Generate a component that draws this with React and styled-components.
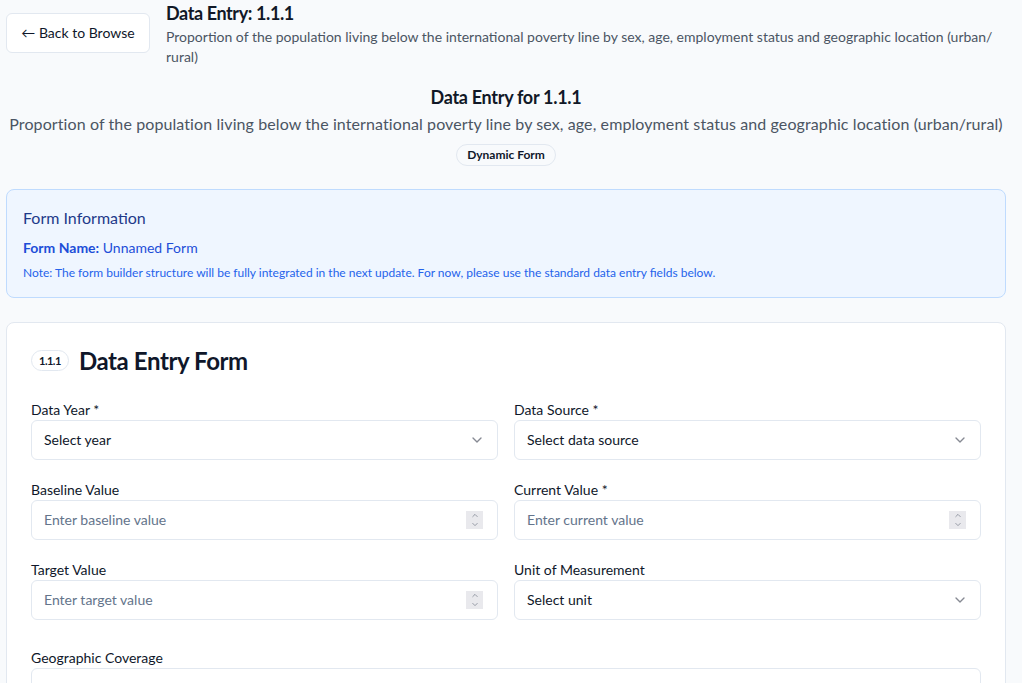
import React from 'react';
import styled, { createGlobalStyle } from 'styled-components';
import { ChevronDown, ChevronUp } from 'lucide-react';

const GlobalStyle = createGlobalStyle`
  html, body {
    margin: 0;
    padding: 0;
    background: #f8fafc;
    font-family: Lato, "Liberation Sans", sans-serif;
    color: #0f172a;
  }
  * { box-sizing: border-box; }
`;

const Page = styled.div`
  padding: 0 16px 0 6px;
`;

const TopBar = styled.div`
  display: flex;
  align-items: center;
  gap: 16px;
`;

const BackButton = styled.button`
  flex: none;
  width: 144px;
  height: 40px;
  padding: 0;
  background: #fff;
  border: 1px solid #e2e8f0;
  border-radius: 6px;
  font: inherit;
  font-size: 14px;
  color: #0f172a;
  margin-top: -2px;
`;

const TitleBlock = styled.div`
  min-width: 0;
`;

const PageTitle = styled.h1`
  margin: 0;
  font-size: 18px;
  line-height: 26px;
  font-weight: 700;
  letter-spacing: -0.4px;
  color: #111827;
`;

const PageSub = styled.p`
  margin: 1px 0 0;
  font-size: 14px;
  line-height: 20px;
  color: #4b5563;
`;

const Intro = styled.div`
  margin-top: 16px;
  text-align: center;
`;

const IntroTitle = styled.h2`
  margin: 0;
  font-size: 18px;
  line-height: 28px;
  font-weight: 700;
  letter-spacing: -0.3px;
  color: #111827;
`;

const IntroSub = styled.p`
  margin: 1px 0 0;
  font-size: 16px;
  line-height: 24px;
  letter-spacing: 0.1px;
  color: #4b5563;
`;

const Pill = styled.span`
  display: inline-flex;
  align-items: center;
  height: ${p => (p.$small ? '21px' : '22px')};
  padding: 0 ${p => (p.$small ? '7px' : '10px')};
  border: 1px solid #e2e8f0;
  border-radius: 999px;
  background: ${p => (p.$small ? '#fff' : 'transparent')};
  font-size: ${p => (p.$small ? '11px' : '12px')};
  font-weight: 700;
  color: #0f172a;
  letter-spacing: ${p => (p.$small ? '-0.5px' : '0')};
`;

const PillRow = styled.div`
  margin-top: 7px;
`;

const InfoBox = styled.section`
  margin-top: 23px;
  padding: 16px;
  background: #eff6ff;
  border: 1px solid #bfdbfe;
  border-radius: 8px;
`;

const InfoTitle = styled.h3`
  margin: 0;
  font-size: 16px;
  line-height: 24px;
  font-weight: 400;
  color: #1e3a8a;
`;

const InfoLine = styled.p`
  margin: 8px 0 0;
  font-size: 14px;
  line-height: 20px;
  color: #1d4ed8;

  strong { font-weight: 700; }
`;

const InfoNote = styled.p`
  margin: 7px 0 0;
  font-size: 12px;
  line-height: 16px;
  color: #2563eb;
`;

const Card = styled.section`
  margin-top: 24px;
  padding: 24px;
  background: #fff;
  border: 1px solid #e2e8f0;
  border-radius: 8px;
  min-height: 400px;
`;

const CardHead = styled.div`
  display: flex;
  align-items: center;
  gap: 10px;
  height: 28px;
`;

const CardTitle = styled.h2`
  margin: 0;
  font-size: 24px;
  line-height: 28px;
  font-weight: 700;
  letter-spacing: -0.4px;
  color: #0f172a;
`;

const Grid = styled.div`
  margin-top: 25px;
  display: grid;
  grid-template-columns: 1fr 1fr;
  column-gap: 16px;
  row-gap: 20px;
`;

const Field = styled.div`
  display: flex;
  flex-direction: column;
  margin-top: ${p => (p.$spaced ? '28px' : '0')};
`;

const Label = styled.label`
  font-size: 14px;
  line-height: 20px;
  color: #0f172a;
`;

const Control = styled.div`
  display: flex;
  align-items: center;
  justify-content: space-between;
  height: 40px;
  padding: 0 12px;
  background: #fff;
  border: 1px solid #e2e8f0;
  border-radius: 6px;
  font-size: 14px;
  color: #0f172a;

  svg.chev {
    color: #0f172a;
    opacity: 0.5;
  }
`;

const Input = styled.input`
  flex: 1;
  min-width: 0;
  border: 0;
  outline: none;
  padding: 0;
  background: transparent;
  font: inherit;
  color: #0f172a;

  &::placeholder { color: #64748b; }
`;

const Spinner = styled.span`
  display: flex;
  flex-direction: column;
  align-items: center;
  justify-content: center;
  width: 17px;
  height: 18px;
  margin-right: 2px;
  background: #e9e9ed;
  color: #6b7280;
  line-height: 0;
`;

function SelectField({ label, value }) {
  return (
    <Field>
      <Label>{label}</Label>
      <Control>
        <span>{value}</span>
        <ChevronDown className="chev" size={16} strokeWidth={2} />
      </Control>
    </Field>
  );
}

function NumberField({ label, placeholder }) {
  return (
    <Field>
      <Label>{label}</Label>
      <Control>
        <Input placeholder={placeholder} />
        <Spinner>
          <ChevronUp size={10} strokeWidth={1.75} />
          <ChevronDown size={10} strokeWidth={1.75} />
        </Spinner>
      </Control>
    </Field>
  );
}

const subtitle =
  'Proportion of the population living below the international poverty line by sex, age, employment status and geographic location (urban/rural)';

export default function App() {
  return (
    <>
      <GlobalStyle />
      <Page>
        <TopBar>
          <BackButton>← Back to Browse</BackButton>
          <TitleBlock>
            <PageTitle>Data Entry: 1.1.1</PageTitle>
            <PageSub>
              Proportion of the population living below the international poverty line by sex, age, employment status
              and geographic location (urban/<wbr />rural)
            </PageSub>
          </TitleBlock>
        </TopBar>

        <Intro>
          <IntroTitle>Data Entry for 1.1.1</IntroTitle>
          <IntroSub>{subtitle}</IntroSub>
          <PillRow>
            <Pill>Dynamic Form</Pill>
          </PillRow>
        </Intro>

        <InfoBox>
          <InfoTitle>Form Information</InfoTitle>
          <InfoLine>
            <strong>Form Name:</strong> Unnamed Form
          </InfoLine>
          <InfoNote>
            Note: The form builder structure will be fully integrated in the next update. For now, please use the
            standard data entry fields below.
          </InfoNote>
        </InfoBox>

        <Card>
          <CardHead>
            <Pill $small>1.1.1</Pill>
            <CardTitle>Data Entry Form</CardTitle>
          </CardHead>
          <Grid>
            <SelectField label="Data Year *" value="Select year" />
            <SelectField label="Data Source *" value="Select data source" />
            <NumberField label="Baseline Value" placeholder="Enter baseline value" />
            <NumberField label="Current Value *" placeholder="Enter current value" />
            <NumberField label="Target Value" placeholder="Enter target value" />
            <SelectField label="Unit of Measurement" value="Select unit" />
          </Grid>
          <Field $spaced>
            <Label>Geographic Coverage</Label>
            <Control />
          </Field>
        </Card>
      </Page>
    </>
  );
}
